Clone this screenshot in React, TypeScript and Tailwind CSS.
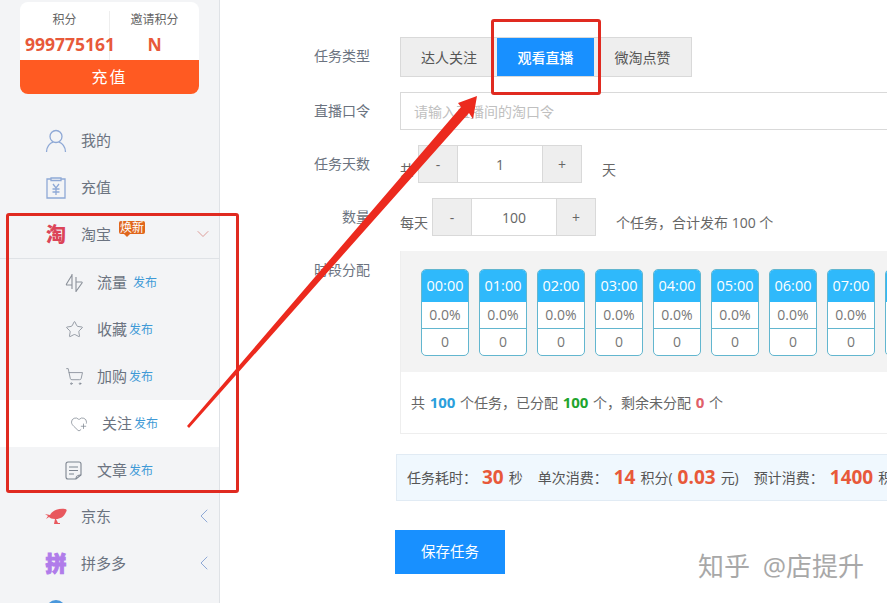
import { FC, ReactNode } from "react";
import { ChevronDown, ChevronLeft, HeartPlus, ShoppingCart, Star } from "lucide-react";

const hours = ["00:00", "01:00", "02:00", "03:00", "04:00", "05:00", "06:00", "07:00"];

const UserIcon = () => (
  <svg width="22" height="24" viewBox="0 0 22 24" fill="none" stroke="#8fa9d6" strokeWidth="1.3">
    <circle cx="11" cy="7.5" r="6" />
    <path d="M1.5 23c0-5.5 3.5-9 6.5-9.8M20.5 23c0-5.5-3.5-9-6.5-9.8" />
  </svg>
);

const BillIcon = () => (
  <svg width="20" height="22" viewBox="0 0 20 22" fill="none" stroke="#8fa9d6" strokeWidth="1.3">
    <path d="M5 2H1v19h18V2h-4" />
    <path d="M5 1h10v2.5H5z" />
    <path d="M7 7l3 4 3-4M6.5 12h7M6.5 15h7M10 11v7" />
  </svg>
);

const FlowIcon = () => (
  <svg width="18" height="18" viewBox="0 0 18 18" fill="none" stroke="#8a9099" strokeWidth="1.1">
    <path d="M7 0v15M7 1L1.5 10q-.5 1 .5 1h5" />
    <path d="M11 3v15M11 17.5L17 9q.5-1-.5-1H11" />
  </svg>
);

const ArticleIcon = () => (
  <svg width="17" height="19" viewBox="0 0 17 19" fill="none" stroke="#7d8590" strokeWidth="1.1">
    <path d="M11 18H3a2 2 0 0 1-2-2V3a2 2 0 0 1 2-2h11a2 2 0 0 1 2 2v11z" />
    <path d="M4 6h9M4 9.5h9M4 13h5M11 18c0-3 1-4 5-4" />
  </svg>
);

const JdIcon = () => (
  <svg width="22" height="17" viewBox="0 0 22 17">
    <path
      d="M0 6l5 1C7 3 13 0 20 1c2 0 2 2 1 3-2 5-6 7-10 7l2 4h2v1H9l1-5C7 11 5 10 4 9l-3 2 2-3z"
      fill="#e8585e"
    />
  </svg>
);

const NavItem: FC<{ icon: ReactNode; label: string; right?: ReactNode; badge?: boolean }> = ({
  icon,
  label,
  right,
  badge,
}) => (
  <div className="relative flex h-[47px] items-center text-[15px] text-[#6b7380]">
    <div className="flex w-[81px] justify-center pl-[31px]">
      <div className="flex w-[24px] justify-center">{icon}</div>
    </div>
    <span>{label}</span>
    {badge && (
      <span className="absolute left-[119px] top-[10px] rounded-[2px] bg-[#e0661c] px-[1px] text-[12px] leading-[13px] text-white">
        焕新
        <span className="absolute left-[5px] top-[13px] border-l-[3px] border-r-[3px] border-t-[3px] border-l-transparent border-r-transparent border-t-[#e0661c]" />
      </span>
    )}
    {right}
  </div>
);

const SubItem: FC<{ icon: ReactNode; label: string; gap?: boolean; active?: boolean }> = ({
  icon,
  label,
  gap,
  active,
}) => (
  <div
    className={
      active
        ? "flex h-[47px] items-center bg-white pl-[70px] text-[15px] text-[#6b7380]"
        : "flex h-[47px] items-center pl-[65px] text-[15px] text-[#6b7380]"
    }
  >
    <div className="flex w-[32px] items-center">{icon}</div>
    <span>{label}</span>
    <span className={gap ? "ml-[6px] mt-[1px] text-[12px] text-[#3f9ad6]" : "ml-[2px] mt-[1px] text-[12px] text-[#3f9ad6]"}>
      发布
    </span>
  </div>
);

const Sidebar = () => (
  <aside className="h-[603px] w-[220px] shrink-0 border-r border-[#dfe2e6] bg-[#f3f4f6] pt-[2px]">
    <div className="ml-[20px] w-[179px] overflow-hidden rounded-[8px] bg-white">
      <div className="flex h-[58px] pt-[9px]">
        <div className="w-[90px] border-r border-[#eeeeee]">
          <div className="text-center text-[12px] leading-[18px] text-[#666666]">积分</div>
          <div className="mt-[3px] pl-[5px] text-[17.5px] font-bold leading-[24px] text-[#e8593a]">999775161</div>
        </div>
        <div className="flex-1 text-center">
          <div className="text-[12px] leading-[18px] text-[#666666]">邀请积分</div>
          <div className="mt-[3px] text-[17.5px] font-bold leading-[24px] text-[#e8593a]">N</div>
        </div>
      </div>
      <div className="flex h-[34px] items-center justify-center bg-[#ff5a22] text-[16px] tracking-[2px] text-white">
        充值
      </div>
    </div>

    <div className="mt-[23px]">
      <NavItem icon={<UserIcon />} label="我的" />
      <NavItem icon={<BillIcon />} label="充值" />
      <NavItem
        icon={<span className="text-[20px] font-black leading-none text-[#dc4458]">淘</span>}
        label="淘宝"
        badge
        right={<ChevronDown className="absolute right-[6px] top-[13px]" size={20} strokeWidth={1} color="#d98b86" />}
      />
      <div className="h-[235px] border-t border-[#dfe2e6]">
        <SubItem icon={<FlowIcon />} label="流量" gap />
        <SubItem icon={<Star size={19} strokeWidth={1} color="#7d8590" />} label="收藏" />
        <SubItem icon={<ShoppingCart size={19} strokeWidth={1} color="#7d8590" />} label="加购" />
        <SubItem icon={<HeartPlus size={18} strokeWidth={1} color="#7d8590" />} label="关注" active />
        <SubItem icon={<ArticleIcon />} label="文章" />
      </div>
      <NavItem
        icon={<JdIcon />}
        label="京东"
        right={<ChevronLeft className="absolute right-[3px] top-[11px]" size={24} strokeWidth={1} color="#8fa9d6" />}
      />
      <NavItem
        icon={
          <span className="text-[21px] font-black leading-none text-[#b07cea] [-webkit-text-stroke:1px_#b07cea]">拼</span>
        }
        label="拼多多"
        right={<ChevronLeft className="absolute right-[3px] top-[11px]" size={24} strokeWidth={1} color="#8fa9d6" />}
      />
      <div className="ml-[46px] mt-[13px] h-[20px] w-[20px] rounded-full bg-[#4a98dc]" />
    </div>
  </aside>
);

const Stepper: FC<{ value: string }> = ({ value }) => (
  <div className="flex h-[38px] w-[164px] border border-[#d9d9d9] text-[14px] text-[#666666]">
    <div className="flex w-[38px] items-center justify-center bg-[#eeeeee]">-</div>
    <div className="flex flex-1 items-center justify-center border-x border-[#d9d9d9] bg-white">{value}</div>
    <div className="flex w-[38px] items-center justify-center bg-[#eeeeee]">+</div>
  </div>
);

const Row: FC<{ label: string; className: string; children: ReactNode }> = ({ label, className, children }) => (
  <div className={`flex ${className}`}>
    <div className="w-[150px] shrink-0 pr-0 text-right text-[14px] leading-[38px] text-[#6b7380]">{label}</div>
    <div className="ml-[30px] flex min-w-0 flex-1 items-center">{children}</div>
  </div>
);

const TaskForm = () => (
  <main className="w-[667px] shrink-0 pt-[37px]">
    <Row label="任务类型" className="h-[40px]">
      <div className="flex h-[40px] w-[292px] border border-[#d9d9d9] bg-[#eeeeee] text-[14px] text-[#555555]">
        <div className="flex w-[96px] items-center justify-center">达人关注</div>
        <div className="flex w-[97px] items-center justify-center bg-[#1890ff] font-medium text-white">观看直播</div>
        <div className="flex flex-1 items-center justify-center">微淘点赞</div>
      </div>
    </Row>
    <Row label="直播口令" className="mt-[15px] h-[38px]">
      <div className="flex h-[38px] w-[520px] shrink-0 items-center border border-[#d9d9d9] pl-[13px] pt-[1px] text-[14px] text-[#c0c0c0]">
        请输入直播间的淘口令
      </div>
    </Row>
    <Row label="任务天数" className="mt-[15px] h-[38px]">
      <span className="mr-[4px] mt-[11px] text-[14px] text-[#666666]">共</span>
      <Stepper value="1" />
      <span className="ml-[20px] mt-[11px] text-[14px] text-[#666666]">天</span>
    </Row>
    <Row label="数量" className="mt-[15px] h-[38px]">
      <span className="mr-[4px] mt-[11px] text-[14px] text-[#666666]">每天</span>
      <Stepper value="100" />
      <span className="ml-[20px] mt-[11px] text-[14px] text-[#666666]">个任务，合计发布 100 个</span>
    </Row>

    <div className="mt-[15px] flex">
      <div className="w-[150px] shrink-0 pt-[9px] text-right text-[14px] leading-[20px] text-[#6b7380]">时段分配</div>
      <div className="ml-[30px] h-[183px] w-[520px] shrink-0 border-b border-l border-[#eeeeee]">
        <div className="flex h-[121px] gap-[10px] bg-[#f3f3f3] pl-[20px] pt-[18px]">
          {hours.map((hour) => (
            <div
              key={hour}
              className="h-[87px] w-[48px] shrink-0 overflow-hidden rounded-[5px] border border-[#62b6cf] bg-white text-center text-[14px] text-[#777777]"
            >
              <div className="-m-[1px] mb-0 h-[33px] bg-[#2fb9fb] text-[14.5px] leading-[33px] text-white">{hour}</div>
              <div className="h-[27px] border-b border-[#62b6cf] leading-[26px]">0.0%</div>
              <div className="leading-[26px]">0</div>
            </div>
          ))}
          {/* next slot, only its edge shows in the window */}
          <div className="h-[87px] w-[48px] shrink-0 overflow-hidden rounded-[5px] border border-[#62b6cf] bg-white">
            <div className="-m-[1px] h-[33px] bg-[#2fb9fb]" />
          </div>
        </div>
        <div className="pl-[10px] pt-[20px] text-[14px] leading-[20px] text-[#666666] [word-spacing:1px]">
          共 <b className="text-[15px] text-[#2b9fdc]">100</b> 个任务，已分配{" "}
          <b className="text-[15px] text-[#1fa52e]">100</b> 个，剩余未分配{" "}
          <b className="text-[15px] text-[#e0606a]">0</b> 个
        </div>
      </div>
    </div>

    <div className="ml-[176px] mt-[20px] flex h-[47px] w-[520px] items-center whitespace-nowrap border border-[#e1ebf4] bg-[#f0f8fe] pl-[10px] text-[14px] text-[#555555]">
      任务耗时：
      <b className="ml-[5px] mr-[5px] text-[19px] text-[#e8593a]">30</b>秒
      <span className="ml-[15px]">单次消费：</span>
      <b className="ml-[6px] mr-[5px] text-[19px] text-[#e8593a]">14</b>积分(
      <b className="mx-[5px] text-[19px] text-[#e8593a]">0.03</b>元)
      <span className="ml-[15px]">预计消费：</span>
      <b className="ml-[6px] mr-[5px] text-[19px] text-[#e8593a]">1400</b>积分
    </div>

    <div className="ml-[175px] mt-[29px] flex h-[44px] w-[110px] items-center justify-center bg-[#1890ff] text-[14.5px] text-white">
      保存任务
    </div>
  </main>
);

const App: FC = () => (
  <div
    className="relative flex h-[603px] w-[887px] overflow-hidden bg-white"
    style={{ fontFamily: '"Open Sans", "Noto Sans CJK SC", sans-serif' }}
  >
    <Sidebar />
    <TaskForm />

    {/* annotations drawn over the screenshot */}
    <div className="absolute left-[6px] top-[213px] h-[280px] w-[233px] rounded-[3px] border-[3px] border-[#e02a20]" />
    <div className="absolute left-[491px] top-[19px] h-[76px] w-[110px] rounded-[3px] border-[3px] border-[#e02a20]" />
    <svg className="absolute left-0 top-0" width="887" height="603" viewBox="0 0 887 603">
      <polygon points="187,426 461,107 458,103 477,96 473,119 469,113 189,428" fill="#ec2a1e" />
    </svg>
    <div className="absolute left-[698px] top-[549px] text-[26px] leading-[34px] text-[#a8a8a8] [word-spacing:6px]">
      知乎 @店提升
    </div>
  </div>
);

export default App;
